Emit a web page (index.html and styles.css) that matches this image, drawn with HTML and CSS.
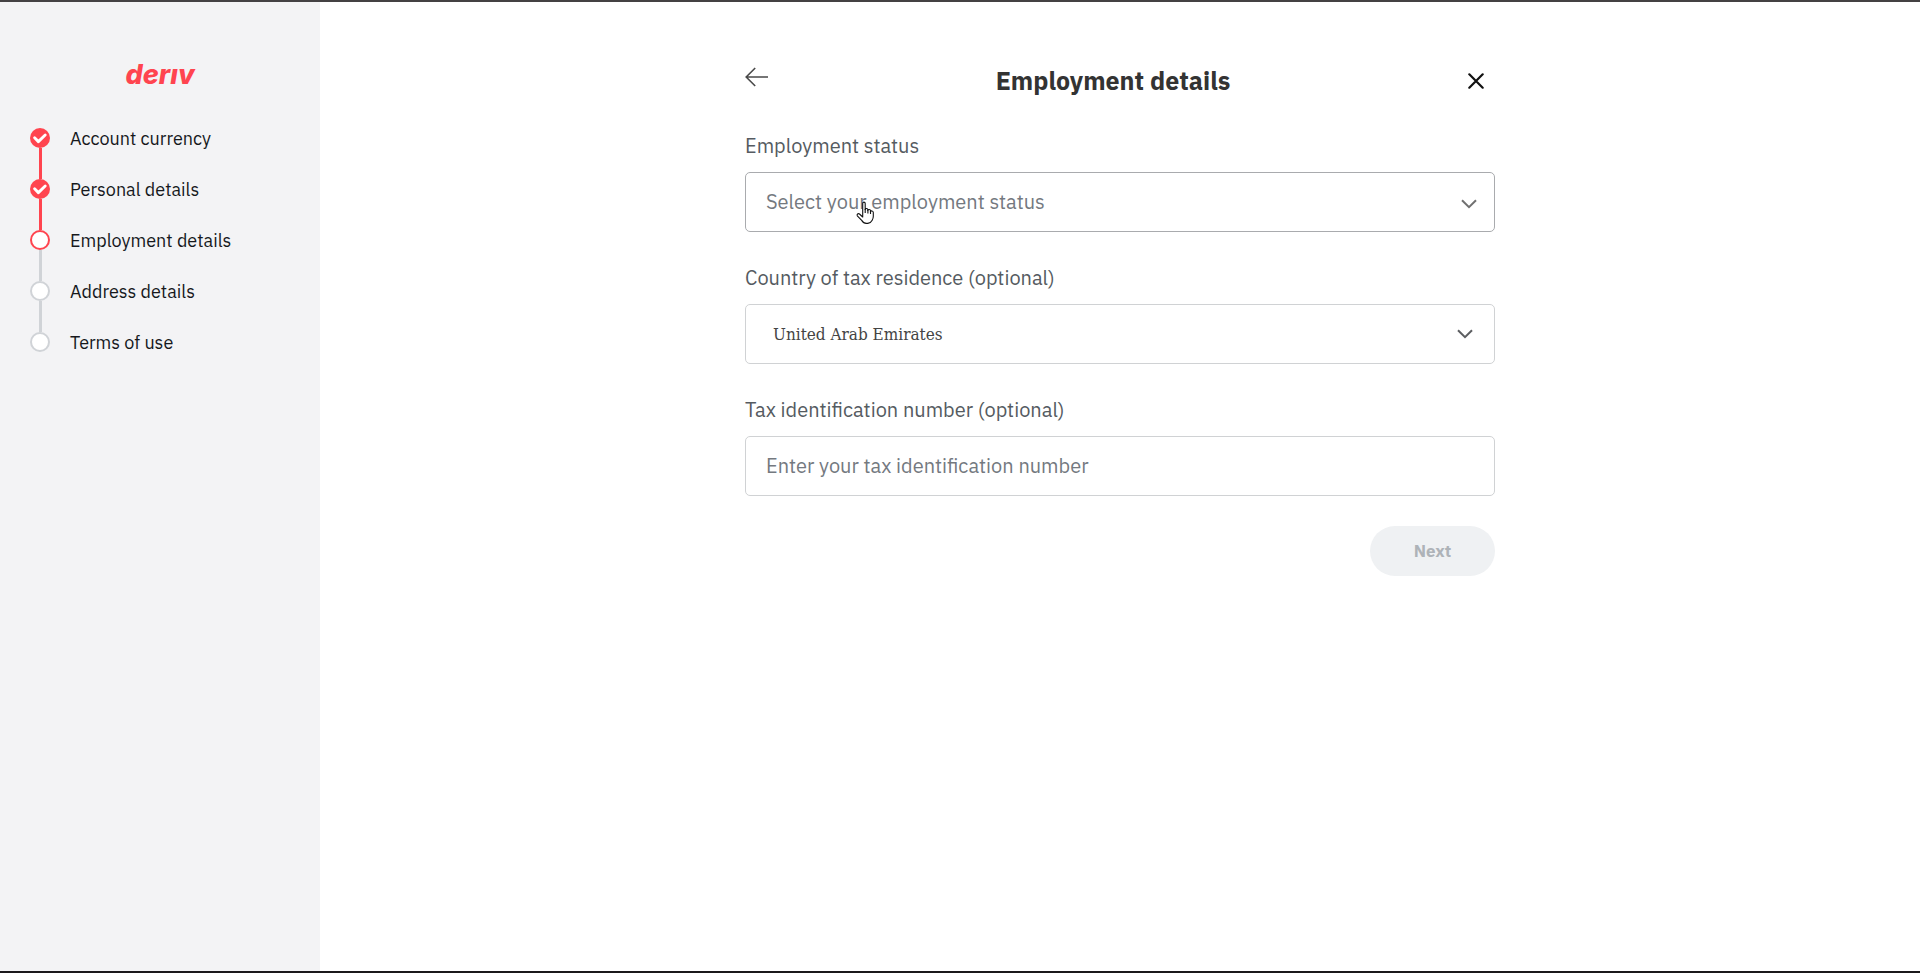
FILE: index.html
```html
<!DOCTYPE html>
<html lang="en">
<head>
  <meta charset="utf-8">
  <meta name="viewport" content="width=device-width, initial-scale=1">
  <title>Employment details</title>
  <link rel="stylesheet" href="styles.css">
</head>
<body>
  <div class="page">
    <aside class="sidebar">
      <div class="logo" role="img" aria-label="deriv">derıv</div>
      <ol class="steps">
        <li class="step step-done">
          <svg class="marker" viewBox="0 0 20 20" aria-hidden="true"><circle cx="10" cy="10" r="10" fill="#ff444f"/><path d="M4.6 9.8l3.8 3.8 6.8-6.6" fill="none" stroke="#fff" stroke-width="2.9" stroke-linecap="round" stroke-linejoin="round"/></svg>
          <span>Account currency</span>
        </li>
        <li class="step step-done">
          <svg class="marker" viewBox="0 0 20 20" aria-hidden="true"><circle cx="10" cy="10" r="10" fill="#ff444f"/><path d="M4.6 9.8l3.8 3.8 6.8-6.6" fill="none" stroke="#fff" stroke-width="2.9" stroke-linecap="round" stroke-linejoin="round"/></svg>
          <span>Personal details</span>
        </li>
        <li class="step" aria-current="step">
          <svg class="marker" viewBox="0 0 20 20" aria-hidden="true"><circle cx="10" cy="10" r="9" fill="#fff" stroke="#ff444f" stroke-width="2"/></svg>
          <span>Employment details</span>
        </li>
        <li class="step">
          <svg class="marker" viewBox="0 0 20 20" aria-hidden="true"><circle cx="10" cy="10" r="9" fill="#fff" stroke="#d0d3d7" stroke-width="2"/></svg>
          <span>Address details</span>
        </li>
        <li class="step">
          <svg class="marker" viewBox="0 0 20 20" aria-hidden="true"><circle cx="10" cy="10" r="9" fill="#fff" stroke="#d0d3d7" stroke-width="2"/></svg>
          <span>Terms of use</span>
        </li>
      </ol>
    </aside>
    <main class="content">
      <form class="form">
        <header class="form-header">
          <button class="icon-button back" type="button" aria-label="Back">
            <svg width="24" height="20" viewBox="0 0 24 20" fill="none" stroke="#4a4a4a" stroke-width="1.6" aria-hidden="true"><path d="M23 10H1M10.2 1l-9 9 9 9"/></svg>
          </button>
          <h1 class="title">Employment details</h1>
          <button class="icon-button close" type="button" aria-label="Close">
            <svg width="16" height="16" viewBox="0 0 16 16" fill="none" stroke="#111" stroke-width="2.2" stroke-linecap="round" aria-hidden="true"><path d="M1.3 1.3l13.4 13.4M14.7 1.3L1.3 14.7"/></svg>
          </button>
        </header>

        <div class="field">
          <label class="label" for="status">Employment status</label>
          <div class="select-wrap">
            <select class="control control-hover" id="status">
              <option>Select your employment status</option>
            </select>
            <svg class="chevron chevron-light" viewBox="0 0 16 10" aria-hidden="true"><path d="M1 1.2l7 7 7-7"/></svg>
            <svg class="pointer" viewBox="0 0 19 24" aria-hidden="true"><path d="M6.7 14V2.500c0-1.900 2.500-1.900 2.500 0v6c.2-1.500 2.600-1.400 2.600.2v.8c.3-1.400 2.700-1.200 2.700.3v.9c.4-1.200 2.800-1 2.800.7v3.800c0 1.600-.4 2.800-1.100 4-.9 1.700-2.200 3-4.400 3.200h-1.600c-2 0-3.400-1.200-4.500-3L1.300 14.800c-.8-1.500.8-2.800 2.200-1.800L6.700 16z" fill="#fff" stroke="#111" stroke-width="1.100" stroke-linejoin="round"/><path d="M9.200 8v4M11.900 9v3.500M14.500 10v3" fill="none" stroke="#111" stroke-width="1.100"/></svg>
          </div>
        </div>

        <div class="field">
          <label class="label" for="country">Country of tax residence (optional)</label>
          <div class="select-wrap">
            <select class="control control-value" id="country">
              <option>United Arab Emirates</option>
            </select>
            <svg class="chevron" viewBox="0 0 16 10" aria-hidden="true"><path d="M1 1.200l7 7 7-7"/></svg>
          </div>
        </div>

        <div class="field">
          <label class="label" for="tin">Tax identification number (optional)</label>
          <input class="control" id="tin" type="text" placeholder="Enter your tax identification number">
        </div>

        <div class="actions">
          <button class="next" type="submit" disabled>Next</button>
        </div>
      </form>
    </main>
  </div>
</body>
</html>
```
FILE: styles.css
```css
* {
  box-sizing: border-box;
}

body {
  margin: 0;
  font-family: "IBM Plex Sans", "Noto Sans", sans-serif;
  color: #16181c;
  background: #fff;
}

.page {
  display: flex;
  min-height: 100vh;
  border-top: 2px solid #444143;
  border-bottom: 2px solid #1b191b;
}

.sidebar {
  flex: 0 0 320px;
  padding: 55px 30px;
  background: #f3f3f5;
}

.logo {
  margin-bottom: 30px;
  font: italic 800 27px/36px Inter, sans-serif;
  color: #ff444f;
  text-align: center;
}

.steps {
  margin: 0;
  padding: 0;
  list-style: none;
}

.step {
  display: flex;
  gap: 20px;
  align-items: center;
  height: 30px;
  margin-bottom: 21px;
  font-size: 18px;
  position: relative;
}

.step:not(:last-child)::after {
  content: "";
  position: absolute;
  top: 25px;
  left: 9px;
  width: 3px;
  height: 31px;
  background: #d0d3d7;
}

.step-done:not(:last-child)::after {
  background: #ff444f;
}

.marker {
  flex: none;
  width: 20px;
  height: 20px;
}

.content {
  flex: 1;
  padding: 58px 24px;
}

.form {
  max-width: 750px;
  margin: 0 auto;
}

.form-header {
  display: flex;
  justify-content: space-between;
  align-items: center;
  margin-bottom: 28px;
}

.icon-button {
  display: flex;
  justify-content: center;
  padding: 0;
  border: 0;
  background: none;
}

.back {
  width: 24px;
  padding-bottom: 8px;
}

.close {
  width: 38px;
}

.title {
  margin: 0;
  font-size: 25px;
  line-height: 42px;
  font-weight: 700;
  color: #333;
}

.field {
  margin-bottom: 30px;
}

.label {
  display: block;
  margin-bottom: 10px;
  font-size: 20px;
  line-height: 32px;
  color: #555b61;
}

.select-wrap {
  position: relative;
}

.control {
  display: block;
  width: 100%;
  height: 60px;
  padding: 0 20px 2px;
  border: 1px solid #d0d2d4;
  border-radius: 5px;
  appearance: none;
  background: #fff;
  font-family: inherit;
  font-size: 20px;
  color: #74797f;
}

.control::placeholder {
  color: #74797f;
  opacity: 1;
}

.control-hover {
  border-color: #a9abae;
}

.control-value {
  padding: 0 27px;
  font-family: "DejaVu Serif Condensed", "DejaVu Serif", serif;
  font-size: 17px;
  color: #444;
}

.chevron {
  position: absolute;
  top: 25px;
  right: 22px;
  width: 16px;
  height: 10px;
  fill: none;
  stroke: #5c5e61;
  stroke-width: 2;
  pointer-events: none;
}

.chevron-light {
  right: 18px;
  top: 27px;
  stroke: #707070;
}

.pointer {
  position: absolute;
  top: 29px;
  left: 111px;
  width: 19px;
  height: 24px;
  pointer-events: none;
}

.actions {
  display: flex;
  justify-content: flex-end;
}

.next {
  min-width: 125px;
  height: 50px;
  border: 0;
  border-radius: 25px;
  background: #eff1f3;
  font-family: inherit;
  font-size: 17px;
  font-weight: 700;
  color: #aeb3b8;
}
```
